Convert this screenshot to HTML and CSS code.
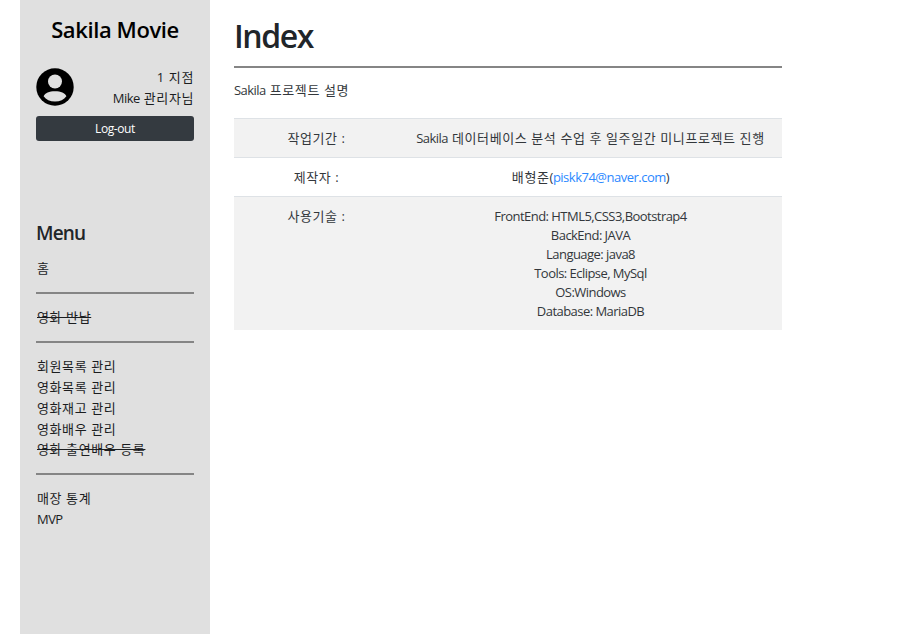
FILE: index.html
```html
<!DOCTYPE html>
<html lang="ko">
<head>
<meta charset="utf-8">
<title>Sakila Movie</title>
<link rel="stylesheet" href="styles.css">
</head>
<body>
<div class="layout">
  <aside class="sidebar">
    <h3 class="brand">Sakila Movie</h3>
    <div class="profile">
      <svg class="avatar" viewBox="0 0 38 38"><circle cx="19" cy="19" r="18.7"/><circle class="cut" cx="19" cy="13.5" r="7"/><path class="cut" d="M7.600 28.200C9.200 25 13 23.200 19 23.200s9.800 1.800 11.400 5C28 31.800 24 33.500 19 33.500S10 31.800 7.600 28.200z"/></svg>
      <div class="who"><div>1 지점</div><div><span class="latin">Mike</span> 관리자님</div></div>
    </div>
    <a class="logout">Log-out</a>
    <h4 class="menu-title">Menu</h4>
    <ul class="menu"><li>홈</li></ul>
    <hr>
    <ul class="menu"><li><del>영화 반납</del></li></ul>
    <hr>
    <ul class="menu"><li>회원목록 관리</li><li>영화목록 관리</li><li>영화재고 관리</li><li>영화배우 관리</li><li><del>영화 출연배우 등록</del></li></ul>
    <hr>
    <ul class="menu"><li>매장 통계</li><li><span class="latin">MVP</span></li></ul>
  </aside>
  <main class="content">
    <h1>Index</h1>
    <hr>
    <p><span class="latin">Sakila</span> 프로젝트 설명</p>
    <table>
      <tr><td class="label">작업기간 :</td><td><span class="latin">Sakila</span> 데이터베이스 분석 수업 후 일주일간 미니프로젝트 진행</td></tr>
      <tr><td>제작자 :</td><td>배형준<span class="email">(<a>piskk74@naver.com</a>)</span></td></tr>
      <tr><td>사용기술 :</td><td class="latin">FrontEnd: HTML5,CSS3,Bootstrap4<br>BackEnd: JAVA<br>Language: java8<br>Tools: Eclipse, MySql<br>OS:Windows<br>Database: MariaDB</td></tr>
    </table>
  </main>
</div>
</body>
</html>
```
FILE: styles.css
```css
* { box-sizing: border-box; }
body { margin: 0; background: #fff; color: #33373b; font: 13px/19px "Open Sans", "Noto Sans CJK KR", sans-serif; letter-spacing: .6px; }
.layout { display: flex; height: 634px; padding-left: 20px; overflow: hidden; }
.sidebar { width: 190px; padding: 15px 16px 0; background: #e0e0e0; color: #1b1d1f; }
h1, h3, h4, p, ul { margin: 0; padding: 0; font-weight: 600; }
.latin { letter-spacing: -.54px; }
.email { letter-spacing: -.5px; }
.brand { color: #000; font-size: 22px; line-height: 28px; text-align: center; white-space: nowrap; letter-spacing: -.4px; }
.profile { display: flex; justify-content: space-between; margin-top: 23px; }
.avatar { width: 38px; height: 38px; margin-top: 2px; }
.cut { fill: #e0e0e0; }
.who { padding-top: 1px; text-align: right; line-height: 21px; }
.logout { display: block; height: 25px; margin-top: 7px; border-radius: 3px; background: #343a40; color: #fff; font-size: 12px; line-height: 25px; text-align: center; letter-spacing: -.4px; }
.menu-title { margin-top: 79px; color: #212529; font-size: 19px; line-height: 26px; letter-spacing: -.8px; }
.menu { list-style: none; line-height: 20.7px; font-weight: 400; padding-left: 1px; }
.menu-title + .menu { margin-top: 12px; }
hr { height: 1.5px; border: 0; margin: 13.5px 0; background: #858585; }
.content { width: 548px; margin-left: 24px; padding-top: 18px; }
h1 { color: #212529; font-size: 32px; line-height: 36px; letter-spacing: -1.4px; }
.content hr { height: 2px; margin: 12px 0 13px; }
p { font-weight: 400; }
table { width: 100%; margin-top: 18px; border-spacing: 0; text-align: center; }
td { padding: 10px 10px 9px; border-top: 1px solid #dee2e6; vertical-align: top; }
.label { width: 165px; }
tr:nth-child(odd) { background: #f2f2f2; }
td a { color: #2b88ff; }
```
